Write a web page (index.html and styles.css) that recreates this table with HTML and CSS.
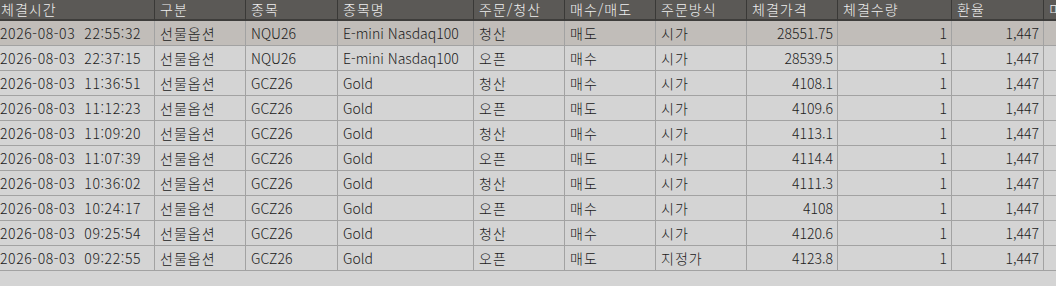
FILE: index.html
```html
<!DOCTYPE html>
<html lang="ko">
<head>
<meta charset="utf-8">
<link rel="stylesheet" href="styles.css">
</head>
<body>
<div class="viewport">
<table class="grid">
<thead>
<tr>
<th class="c1">체결시간</th><th class="c2">구분</th><th class="c3">종목</th><th class="c4">종목명</th><th class="c5">주문/청산</th><th class="c6">매수/매도</th><th class="c7">주문방식</th><th class="c8">체결가격</th><th class="c9">체결수량</th><th class="c10">환율</th><th class="c11">미체결</th>
</tr>
</thead>
<tbody>
<tr class="sel"><td class="t">2026-08-03  22:55:32</td><td class="k">선물옵션</td><td>NQU26</td><td>E-mini Nasdaq100</td><td class="k">청산</td><td class="k">매도</td><td class="k">시가</td><td class="n">28551.75</td><td class="n">1</td><td class="n">1,447</td><td></td></tr>
<tr><td class="t">2026-08-03  22:37:15</td><td class="k">선물옵션</td><td>NQU26</td><td>E-mini Nasdaq100</td><td class="k">오픈</td><td class="k">매수</td><td class="k">시가</td><td class="n">28539.5</td><td class="n">1</td><td class="n">1,447</td><td></td></tr>
<tr><td class="t">2026-08-03  11:36:51</td><td class="k">선물옵션</td><td>GCZ26</td><td>Gold</td><td class="k">청산</td><td class="k">매수</td><td class="k">시가</td><td class="n">4108.1</td><td class="n">1</td><td class="n">1,447</td><td></td></tr>
<tr><td class="t">2026-08-03  11:12:23</td><td class="k">선물옵션</td><td>GCZ26</td><td>Gold</td><td class="k">오픈</td><td class="k">매도</td><td class="k">시가</td><td class="n">4109.6</td><td class="n">1</td><td class="n">1,447</td><td></td></tr>
<tr><td class="t">2026-08-03  11:09:20</td><td class="k">선물옵션</td><td>GCZ26</td><td>Gold</td><td class="k">청산</td><td class="k">매수</td><td class="k">시가</td><td class="n">4113.1</td><td class="n">1</td><td class="n">1,447</td><td></td></tr>
<tr><td class="t">2026-08-03  11:07:39</td><td class="k">선물옵션</td><td>GCZ26</td><td>Gold</td><td class="k">오픈</td><td class="k">매도</td><td class="k">시가</td><td class="n">4114.4</td><td class="n">1</td><td class="n">1,447</td><td></td></tr>
<tr><td class="t">2026-08-03  10:36:02</td><td class="k">선물옵션</td><td>GCZ26</td><td>Gold</td><td class="k">청산</td><td class="k">매도</td><td class="k">시가</td><td class="n">4111.3</td><td class="n">1</td><td class="n">1,447</td><td></td></tr>
<tr><td class="t">2026-08-03  10:24:17</td><td class="k">선물옵션</td><td>GCZ26</td><td>Gold</td><td class="k">오픈</td><td class="k">매수</td><td class="k">시가</td><td class="n">4108</td><td class="n">1</td><td class="n">1,447</td><td></td></tr>
<tr><td class="t">2026-08-03  09:25:54</td><td class="k">선물옵션</td><td>GCZ26</td><td>Gold</td><td class="k">청산</td><td class="k">매수</td><td class="k">시가</td><td class="n">4120.6</td><td class="n">1</td><td class="n">1,447</td><td></td></tr>
<tr><td class="t">2026-08-03  09:22:55</td><td class="k">선물옵션</td><td>GCZ26</td><td>Gold</td><td class="k">오픈</td><td class="k">매도</td><td class="k">지정가</td><td class="n">4123.8</td><td class="n">1</td><td class="n">1,447</td><td></td></tr>
</tbody>
</table>
</div>
</body>
</html>
```
FILE: styles.css
```css
html, body {
  margin: 0;
  padding: 0;
  background: #d4d4d4;
}
.viewport {
  width: 1056px;
  height: 286px;
  overflow: hidden;
  background: #d4d4d4;
}
.grid {
  table-layout: fixed;
  border-collapse: separate;
  border-spacing: 0;
  width: 1124px;
  font-family: "Noto Sans CJK KR", "Noto Sans", sans-serif;
  font-size: 14px;
  font-weight: 300;
  color: #202020;
}
.grid th, .grid td {
  box-sizing: border-box;
  padding: 0 0 0 5px;
  white-space: pre;
  overflow: hidden;
  text-align: left;
  font-weight: 300;
}
.grid th {
  height: 21px;
  background: #5b5956;
  color: #eeeeee;
  border-bottom: 2px solid #3e3d3b;
  border-right: 1px solid #3a3937;
  line-height: 18px;
  vertical-align: top;
  letter-spacing: 1px;
}
.grid td {
  height: 25px;
  border-bottom: 1px solid #a2a2a2;
  border-right: 1px solid #a2a2a2;
  background: #d4d4d4;
  line-height: 24px;
}
.grid tr.sel td {
  background: #c1bdb9;
}
.grid th.c1 {
  padding-left: 1px;
}
.grid td.t {
  padding-left: 0;
  letter-spacing: 0.6px;
}
.grid td.k {
  letter-spacing: 1px;
}
.grid td.n {
  text-align: right;
  padding: 0 4px 0 0;
}
.c1 { width: 155px; }
.c2 { width: 91px; }
.c3 { width: 92px; }
.c4 { width: 136px; }
.c5 { width: 91px; }
.c6 { width: 91px; }
.c7 { width: 91px; }
.c8 { width: 91px; }
.c9 { width: 114px; }
.c10 { width: 92px; }
.c11 { width: 80px; }
```
